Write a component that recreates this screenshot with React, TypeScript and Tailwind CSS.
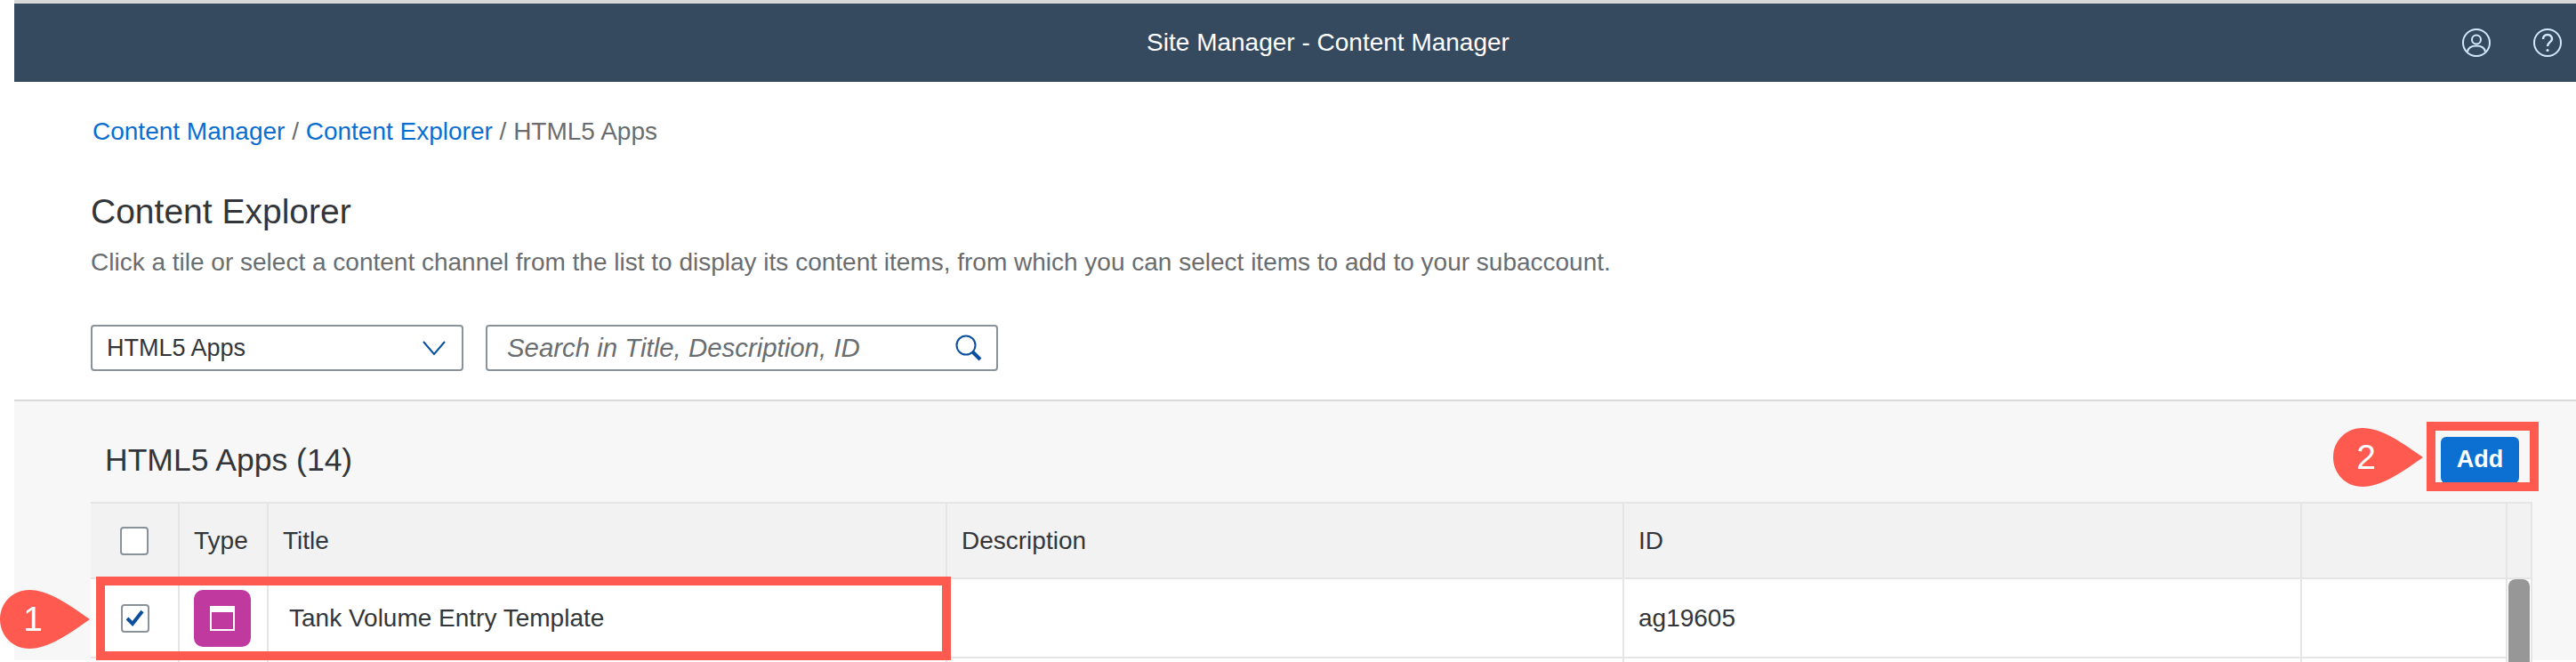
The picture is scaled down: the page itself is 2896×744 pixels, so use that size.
function Callout({ n, className }: { n: string; className: string }) {
  return (
    <div className={`absolute h-[66px] w-[101px] ${className}`}>
      <svg width="101" height="66" viewBox="0 0 101 66" className="absolute inset-0">
        <path d="M33 0C55 0 78 17 101 33C78 49 55 66 33 66C14 66 0 51 0 33C0 15 14 0 33 0Z" fill="#ff5a4f" />
      </svg>
      <span className="absolute inset-y-0 left-[18px] w-[38px] text-center text-[39px] leading-[66px] text-white">
        {n}
      </span>
    </div>
  );
}

function Checkbox({ checked }: { checked?: boolean }) {
  return (
    <div className="flex h-8 w-8 items-center justify-center rounded-[4px] border-2 border-[#89919a] bg-white">
      {checked && (
        <svg width="20" height="20" viewBox="0 0 20 20" fill="none">
          <path d="M1 10L7 16L18 2" stroke="#0a4f9e" strokeWidth="4" />
        </svg>
      )}
    </div>
  );
}

function HeaderCell({ children, className }: { children?: React.ReactNode; className: string }) {
  return <div className={`flex items-center border-r-2 border-[#e5e5e5] ${className}`}>{children}</div>;
}

export default function App() {
  return (
    <div className="relative h-[744px] w-[2896px] overflow-hidden bg-white pl-4 font-['Liberation_Sans',sans-serif] text-[#32363a]">
      <div className="h-1 bg-[#d9d9d9]" />
      <header className="flex h-[88px] items-center bg-[#354a5f] pr-4">
        <div className="flex-1 pl-[202px] text-center text-[28px] text-white">Site Manager - Content Manager</div>
        <div className="flex items-center gap-[48px]">
          <svg width="32" height="32" viewBox="0 0 32 32" fill="none" stroke="#d1e8ff" strokeWidth="2">
            <circle cx="16" cy="16" r="15" />
            <circle cx="16" cy="12.5" r="5" />
            <path d="M6 26C7 21 11 19.5 16 19.5C21 19.5 25 21 26 26" />
          </svg>
          <svg width="32" height="32" viewBox="0 0 32 32" fill="none" stroke="#d1e8ff" strokeWidth="2">
            <circle cx="16" cy="16" r="15" />
            <path d="M11 12C11 9 13 7 16 7C19 7 21 9 21 12C21 15 16 15.5 16 20" strokeWidth="2.5" />
            <circle cx="16" cy="24.5" r="1.6" fill="#d1e8ff" stroke="none" />
          </svg>
        </div>
      </header>

      <section className="h-[357px] pl-[86px] pt-[38px]">
        <div className="pl-[2px] text-[28px] leading-[36px] text-[#6a6d70]">
          <a className="text-[#0a6ed1]">Content Manager</a> / <a className="text-[#0a6ed1]">Content Explorer</a> / HTML5 Apps
        </div>
        <h1 className="mt-[50px] text-[39px] leading-[44px]">Content Explorer</h1>
        <p className="mt-[17px] text-[28px] leading-[36px] text-[#6a6d70]">
          Click a tile or select a content channel from the list to display its content items, from which you can select items to add to your subaccount.
        </p>
        <div className="mt-[52px] flex gap-[25px]">
          <div className="flex h-[52px] w-[419px] items-center justify-between rounded-[4px] border-2 border-[#89919a] pl-4 pr-[18px] text-[27px]">
            HTML5 Apps
            <svg width="26" height="16" viewBox="0 0 26 16" fill="none" stroke="#0a4f9e" strokeWidth="2">
              <path d="M1 1L13 15L25 1" />
            </svg>
          </div>
          <div className="flex h-[52px] w-[576px] items-center justify-between rounded-[4px] border-2 border-[#89919a] pl-[22px] pr-4 text-[29.4px] italic text-[#6a6d70]">
            Search in Title, Description, ID
            <svg width="30" height="30" viewBox="0 0 30 30" fill="none" stroke="#0a4f9e" strokeWidth="2">
              <circle cx="12" cy="12" r="10.5" />
              <path d="M19 19L28 28" strokeWidth="4" />
            </svg>
          </div>
        </div>
      </section>

      <section className="h-[293px] border-t-2 border-[#d9d9d9] bg-[#f7f7f7] pl-[86px] pr-[49px]">
        <div className="flex h-[113px] items-center justify-between pl-4 pr-[15px] pt-[18px]">
          <h2 className="text-[35.5px] leading-[44px]">HTML5 Apps (14)</h2>
          <button className="h-[52px] w-[88px] rounded-[6px] bg-[#0c6fd2] text-[27px] font-bold text-white">
            Add
          </button>
        </div>

        <div className="flex border-t-2 border-[#e5e5e5]">
          <div className="flex-1">
            <div className="flex h-[85px] border-b-2 border-[#e5e5e5] bg-[#f2f2f2] text-[28px]">
              <HeaderCell className="w-[100px] justify-center">
                <Checkbox />
              </HeaderCell>
              <HeaderCell className="w-[100px] pl-4">Type</HeaderCell>
              <HeaderCell className="w-[763px] pl-4">Title</HeaderCell>
              <HeaderCell className="w-[761px] pl-4">Description</HeaderCell>
              <HeaderCell className="w-[762px] pl-4">ID</HeaderCell>
              <HeaderCell className="flex-1" />
            </div>
            <div className="flex h-[89px] border-b-2 border-[#e5e5e5] bg-white text-[28px]">
              <HeaderCell className="w-[100px] justify-center pl-[2px]">
                <Checkbox checked />
              </HeaderCell>
              <HeaderCell className="w-[100px] pl-4">
                <div className="flex h-16 w-16 items-center justify-center rounded-[10px] bg-[#c0399f]">
                  <div className="h-7 w-7 border-2 border-t-[7px] border-white" />
                </div>
              </HeaderCell>
              <HeaderCell className="w-[763px] pl-[23px]">Tank Volume Entry Template</HeaderCell>
              <HeaderCell className="w-[761px]" />
              <HeaderCell className="w-[762px] pl-4">ag19605</HeaderCell>
              <HeaderCell className="flex-1" />
            </div>
            <div className="flex h-[89px] bg-white">
              <HeaderCell className="w-[100px]" />
              <HeaderCell className="w-[100px]" />
              <HeaderCell className="w-[763px]" />
              <HeaderCell className="w-[761px]" />
              <HeaderCell className="w-[762px]" />
              <HeaderCell className="flex-1" />
            </div>
          </div>
          <div className="w-[28px] border-r-2 border-[#e5e5e5]">
            <div className="h-[85px] border-b-2 border-[#e5e5e5] bg-[#f2f2f2]" />
            <div className="h-[200px] bg-white pl-[1px]">
              <div className="h-full w-6 rounded-t-[8px] bg-[#979797]" />
            </div>
          </div>
        </div>
      </section>

      {/* annotations drawn over the screenshot */}
      <div className="absolute left-[108px] top-[648px] h-[94px] w-[961px] border-[10px] border-[#ff5a4f]" />
      <div className="absolute left-[2728px] top-[474px] h-[78px] w-[126px] border-[10px] border-[#ff5a4f]" />
      <Callout n="1" className="left-0 top-[663px]" />
      <Callout n="2" className="left-[2623px] top-[481px]" />
    </div>
  );
}
